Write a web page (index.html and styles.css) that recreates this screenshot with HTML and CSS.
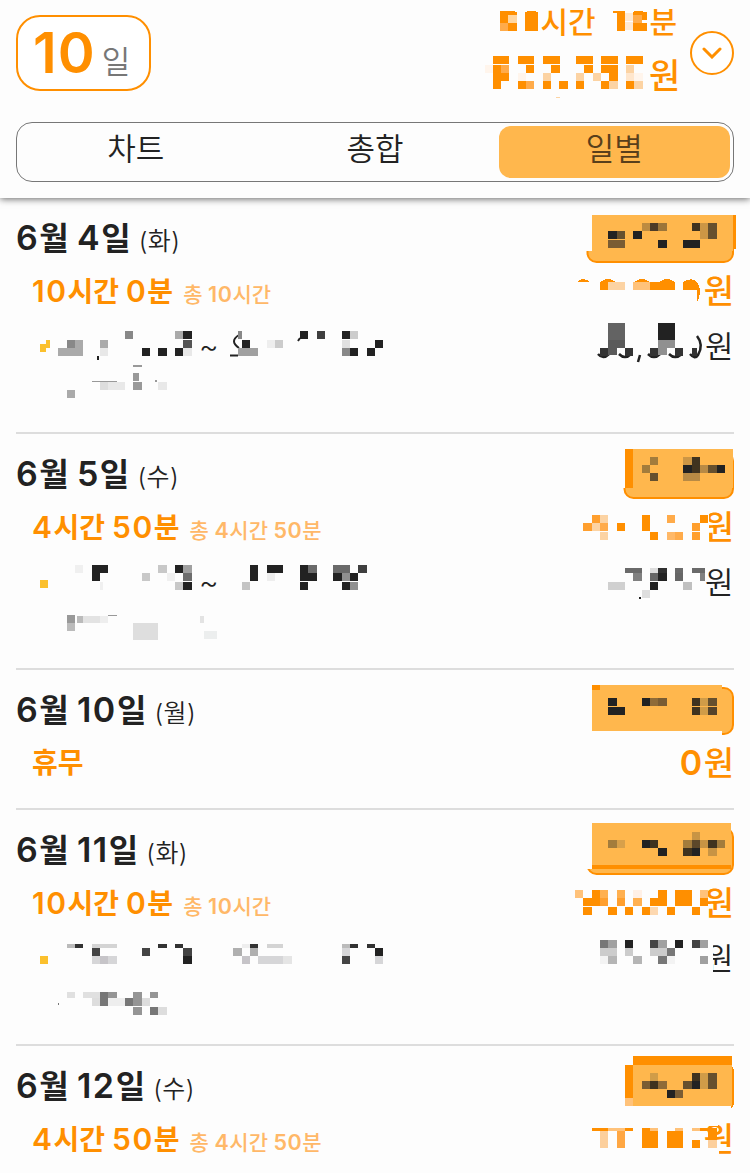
FILE: index.html
```html
<!DOCTYPE html>
<html lang="ko">
<head>
    <meta charset="UTF-8">
    <meta name="viewport" content="width=device-width, initial-scale=1.0">
    <title>일별 근무 기록</title>
    <link rel="stylesheet" href="styles.css">
</head>
<body>
    <header class="header">
        <div class="summary">
            <div class="day-count"><b>10</b><span>일</span></div>
            <div class="totals">
                <div class="total-time">
                    <svg class="mosaic" width="49" height="44" viewBox="492 0 49 44">
                        <path stroke="#ff8f00" stroke-width="1" d="M500 11.500h15M527 11.500h9"/>
                        <path stroke="#ff8f00" stroke-width="19" d="M500 21.5h17M525 21.5h13"/>
                        <path stroke="#ffd6a0" d="M508 19h9"/>
                        <path stroke="#ffab4a" d="M500 27h8"/>
                    </svg>
                    <span class="hours">시간</span>
                    <svg class="mosaic" width="50" height="44" viewBox="600 0 50 44">
                        <path stroke="#ff8f00" stroke-width="2" d="M613 12h12M634 12h9"/>
                        <path stroke="#ff8f00" stroke-width="19" d="M617 21.5h8M633 21.5h9"/>
                        <path stroke="#ff8f00" d="M642 16h5M642 27h5"/>
                        <path stroke="#ffe9d2" d="M625 17h8M625 26h8"/>
                        <path stroke="#ffab4a" d="M633 19h9"/>
                    </svg>
                    <span>분</span>
                </div>
                <div class="total-pay">
                    <svg class="mosaic" width="164" height="54" viewBox="484 46 164 54">
                        <path stroke="#ff8f00" d="M492 60h16M517 60h16M542 60h17M575 60h17M600 60h17M625 60h17M492 69h8M525 69h8M550 69h9M583 69h9M600 69h17M492 77h16M608 77h9M492 85h8M517 85h8M542 85h8M558 85h9M575 85h8M600 85h8M625 85h8"/>
                        <path stroke="#ffab4a" d="M500 69h8M525 85h8"/>
                        <path stroke="#fcd3a3" d="M542 77h8M575 77h8M592 77h8M608 85h9M625 69h8M633 85h9"/>
                        <path stroke="#ffe6cc" d="M625 77h8"/>
                        <path stroke="#fff5ec" d="M484 69h8M517 77h8M633 77h9"/>
                        <path stroke="#fcd3a3" stroke-width="1" d="M555 97.500h4"/>
                    </svg>
                    <span>원</span>
                </div>
            </div>
            <button class="toggle" aria-label="펼치기">
                <svg width="20" height="12" viewBox="0 0 20 12"><path d="M2 2l8 8 8-8"/></svg>
            </button>
        </div>
        <nav class="tabs">
            <a href="#chart">차트</a>
            <a href="#total">총합</a>
            <a href="#daily" class="active">일별</a>
        </nav>
    </header>

    <main>
        <section class="day">
            <div class="day-head">
                <h2><b>6</b>월 <b>4</b>일 <small>(화)</small></h2>
                <svg class="mosaic" width="158" height="48" viewBox="576 215 158 48">
                    <rect class="badge" x="587.500" y="225" width="145.500" height="37" rx="9"/>
                    <path fill="#fdfdfd" stroke="none" d="M585 215h8v36h-8z"/>
                    <path fill="#ffb74d" stroke="none" d="M592 215h141v36h-141z"/>
                    <path fill="#ff8f00" stroke="none" d="M733 215h3v34h-3z"/>
                    <path stroke="#bd8b40" d="M642 227h8"/>
                    <path stroke="#4d3b27" d="M650 227h8"/>
                    <path stroke="#9c7539" d="M658 227h9"/>
                    <path stroke="#40331f" d="M692 227h8"/>
                    <path stroke="#cc9645" d="M700 227h8M700 235h8"/>
                    <path stroke="#66502e" d="M708 227h9M708 235h9M617 235h8"/>
                    <path stroke="#222" d="M608 235h9M633 235h9M658 244h9M683 244h17"/>
                    <path stroke="#7a5c33" d="M608 244h17"/>
                </svg>
            </div>
            <div class="day-time">
                <p><b>10</b>시간 <b>0</b>분 <small>총 <b>10</b>시간</small></p>
                <svg class="mosaic" width="128" height="56" viewBox="576 263 128 56">
                    <path fill="#ff8f00" stroke="none" d="M577 282q6-6 13 0zM600 282q8-6 16 0zM634 282q8-6 16 0zM659 282q8-6 16 0zM683 282q14-8 17 8q0 8-3 12v-18z"/>
                    <path stroke="#ff8f00" d="M600 286h8M650 286h25M683 286h14"/>
                    <path stroke="#fcd3a3" d="M608 286h17"/>
                    <path stroke="#ffc27a" d="M633 286h17"/>
                </svg>
                <span class="pay">원</span>
            </div>
            <div class="shift">
                <svg class="mosaic" width="184" height="54" viewBox="16 319 184 54">
                    <path stroke="#fbc02d" d="M40 348h6M46 344h4"/>
                    <path stroke="#888" d="M67 344h8M125 335h8"/>
                    <path stroke="#aaa" d="M75 344h8M58 352h25M100 344h8M175 335h8"/>
                    <path stroke="#e8e8e8" d="M100 352h8M183 352h9"/>
                    <path stroke="#222" d="M183 335h9M142 352h8M158 352h9M175 352h8"/>
                    <path stroke="#555" d="M183 344h9"/>
                    <path stroke="#222" stroke-width="4" d="M97 358h2"/>
                </svg>
                <span class="tilde">~</span>
                <svg class="mosaic" width="182" height="54" viewBox="218 319 182 54">
                    <path fill="none" stroke="#222" stroke-width="2" shape-rendering="auto" d="M239 335q-10 6 0 13M230 355.500h8M300 338l-2 3"/>
                    <path stroke="#888" d="M238 335h4M342 352h8"/>
                    <path stroke="#a0a0a0" d="M238 352h20"/>
                    <path stroke="#222" d="M242 344h8M300 335h8M342 335h8M350 352h8M375 344h8M367 352h8"/>
                    <path stroke="#3f3f3f" d="M317 335h8"/>
                    <path stroke="#eee" d="M267 344h8"/>
                    <path stroke="#ccc" d="M275 344h8M350 335h8"/>
                    <path stroke="#e0e0e0" d="M342 344h8"/>
                </svg>
                <svg class="mosaic amount" width="130" height="54" viewBox="575 319 130 54">
                    <path fill="none" stroke="#222" stroke-width="2.500" shape-rendering="auto" d="M598 354q5 6 11 0M619 354q6 6 12 0M648 354q6 6 12 0M669 354q6 6 13 0M690 354q5 6 8 1q6-10-1-19M640 355l-2 7"/>
                    <path stroke="#636363" stroke-width="17" d="M608 331.500h17"/>
                    <path stroke="#5a5a5a" stroke-width="15" d="M608 347.500h9"/>
                    <path stroke="#5a5a5a" d="M617 344h8"/>
                    <path stroke="#222" stroke-width="17" d="M658 331.500h17"/>
                    <path stroke="#909090" d="M658 344h17M658 351h9"/>
                    <path stroke="#333" d="M600 352h8M625 352h8M650 352h8M675 352h8M692 352h5"/>
                </svg>
                <span class="won">원</span>
            </div>
            <svg class="mosaic" width="718" height="59" viewBox="16 373 718 59">
                <path stroke="#999" stroke-width="2" d="M133 366h9M155 381h2"/>
                <path stroke="#999" stroke-width="1" d="M92 381.500h25"/>
                <path stroke="#999" d="M133 377h6M133 386h9"/>
                <path stroke="#ddd" d="M100 386h8"/>
                <path stroke="#e8e8e8" d="M108 386h17M158 386h9"/>
                <path stroke="#aaa" d="M67 394h8"/>
            </svg>
        </section>

        <section class="day">
            <div class="day-head">
                <h2><b>6</b>월 <b>5</b>일 <small>(수)</small></h2>
                <svg class="mosaic" width="158" height="48" viewBox="576 451 158 48">
                    <rect class="badge" x="624.500" y="452" width="108.500" height="46" rx="9"/>
                    <path fill="#fdfdfd" stroke="none" d="M622 450h4v38h-4z"/>
                    <path fill="#ffb74d" stroke="none" d="M625 449h108v39h-108z"/>
                    <path fill="#ff8f00" stroke="none" d="M625 449h8v39h-8z"/>
                    <path stroke="#a37c3c" d="M650 461h8M642 469h8"/>
                    <path stroke="#cc9645" d="M683 461h9"/>
                    <path stroke="#40331f" d="M692 461h8M692 469h8"/>
                    <path stroke="#222" d="M683 469h9M717 469h8"/>
                    <path stroke="#b88a45" d="M700 469h8M683 477h17"/>
                    <path stroke="#66502e" d="M708 469h9M650 477h8"/>
                </svg>
            </div>
            <div class="day-time">
                <p><b>4</b>시간 <b>50</b>분 <small>총 <b>4</b>시간 <b>50</b>분</small></p>
                <svg class="mosaic" width="128" height="56" viewBox="576 499 128 56">
                    <path fill="#fdfdfd" stroke="none" d="M700 512h9v30h-9z"/>
                    <path stroke="#ff8f00" d="M642 519h8M700 519h8M617 527h8M642 527h8M650 536h8"/>
                    <path stroke="#ff9f2e" d="M592 519h8M583 527h9M692 527h8M692 536h8"/>
                    <path stroke="#ffab4a" d="M667 519h8M600 527h8M675 536h8"/>
                    <path stroke="#fcd3a3" d="M600 519h8M592 527h8M600 536h8"/>
                    <path stroke="#ffb867" d="M667 536h8"/>
                </svg>
                <span class="pay">원</span>
            </div>
            <div class="shift">
                <svg class="mosaic" width="184" height="54" viewBox="16 555 184 54">
                    <path stroke="#fbc02d" d="M40 584h8"/>
                    <path stroke="#222" d="M92 569h16M175 569h8M92 577h8M183 586h9"/>
                    <path stroke="#c8c8c8" d="M158 569h9M142 577h8M175 586h8"/>
                    <path stroke="#a0a0a0" d="M183 569h9"/>
                    <path stroke="#6d6d6d" d="M183 577h9"/>
                    <path stroke="#f0f0f0" d="M75 569h8M167 577h8M100 586h3"/>
                </svg>
                <span class="tilde">~</span>
                <svg class="mosaic" width="182" height="54" viewBox="218 555 182 54">
                    <path stroke="#222" d="M250 569h8M267 569h16M300 569h8M250 577h8M300 577h17M333 577h9M350 577h8M300 586h8M342 586h8"/>
                    <path stroke="#6a6a6a" d="M308 569h9M333 569h17"/>
                    <path stroke="#3f3f3f" d="M358 569h9"/>
                    <path stroke="#eee" d="M267 577h8"/>
                    <path stroke="#909090" d="M342 577h8M350 586h8"/>
                    <path stroke="#c4c4c4" d="M242 586h8"/>
                </svg>
                <svg class="mosaic amount" width="130" height="54" viewBox="575 555 130 54">
                    <path stroke="#6a6a6a" stroke-width="5" d="M625 570.500h17M675 570.500h8M692 570.500h13"/>
                    <path stroke="#ddd" stroke-width="5" d="M650 570.500h8"/>
                    <path stroke="#303030" stroke-width="5" d="M658 570.500h9"/>
                    <path stroke="#808080" d="M633 577h9M700 577h5"/>
                    <path stroke="#666" d="M650 577h8M675 577h8"/>
                    <path stroke="#222" d="M658 577h9M650 586h8"/>
                    <path stroke="#d0d0d0" d="M608 586h17"/>
                    <path stroke="#c0c0c0" d="M683 586h9"/>
                    <path stroke="#dedede" d="M642 594h8"/>
                    <path stroke="#222" stroke-width="2" d="M639 598h2"/>
                </svg>
                <span class="won">원</span>
            </div>
            <svg class="mosaic" width="718" height="59" viewBox="16 609 718 59">
                <path stroke="#999" d="M67 619h8"/>
                <path stroke="#999" stroke-width="1" d="M108 615.500h9"/>
                <path stroke="#bbb" d="M67 627h8"/>
                <path stroke="#bbb" stroke-width="7" d="M77 619.500h6"/>
                <path stroke="#e3e3e3" stroke-width="7" d="M83 619.500h17M200 619.500h4"/>
                <path stroke="#eee" stroke-width="7" d="M100 619.500h8"/>
                <path stroke="#dedede" stroke-width="17" d="M133 631.500h25"/>
                <path stroke="#eceeee" d="M204 635h13"/>
            </svg>
        </section>

        <section class="day">
            <div class="day-head">
                <h2><b>6</b>월 <b>10</b>일 <small>(월)</small></h2>
                <svg class="mosaic" width="158" height="48" viewBox="576 687 158 48">
                    <rect class="badge" x="690" y="688" width="43" height="46" rx="9"/>
                    <path fill="#fdfdfd" stroke="none" d="M686 730h36v6h-36z"/>
                    <path fill="#ffb74d" stroke="none" d="M592 685h130v46h-130z"/>
                    <path fill="#ff8f00" stroke="none" d="M592 685h8v5h-8z"/>
                    <path stroke="#222" d="M608 702h9M642 702h8M608 711h17"/>
                    <path stroke="#8f6b38" d="M650 702h8"/>
                    <path stroke="#7a5c33" d="M658 702h9"/>
                    <path stroke="#40331f" d="M692 702h8M692 711h8"/>
                    <path stroke="#d09c48" d="M700 702h8M700 711h8"/>
                    <path stroke="#66502e" d="M708 702h9"/>
                    <path stroke="#55432a" d="M708 711h9"/>
                </svg>
            </div>
            <div class="day-time">
                <p>휴무</p>
                <span class="pay"><b>0</b>원</span>
            </div>
        </section>

        <section class="day">
            <div class="day-head">
                <h2><b>6</b>월 <b>11</b>일 <small>(화)</small></h2>
                <svg class="mosaic" width="158" height="48" viewBox="576 827 158 48">
                    <rect class="badge" x="587.500" y="828" width="145.500" height="46" rx="9"/>
                    <path fill="#fdfdfd" stroke="none" d="M585 825h8v44h-8z"/>
                    <path fill="#ffb74d" stroke="none" d="M592 823h139v42h-139z"/>
                    <path fill="#ff8f00" stroke="none" d="M592 865h139v4h-139z"/>
                    <path stroke="#c89444" d="M692 836h8M700 844h8M708 852h9"/>
                    <path stroke="#a37c3c" d="M608 844h9M683 844h9M717 844h8"/>
                    <path stroke="#d8a04a" d="M617 844h8"/>
                    <path stroke="#222" d="M642 844h8M658 852h9M692 852h8"/>
                    <path stroke="#40331f" d="M650 844h8M708 844h9M683 852h9"/>
                    <path stroke="#5c472a" d="M692 844h8"/>
                </svg>
            </div>
            <div class="day-time">
                <p><b>10</b>시간 <b>0</b>분 <small>총 <b>10</b>시간</small></p>
                <svg class="mosaic" width="128" height="56" viewBox="576 875 128 56">
                    <path fill="#fdfdfd" stroke="none" d="M700 888h8v30h-8z"/>
                    <path stroke="#ff8f00" d="M592 894h8M658 894h9M675 894h17M583 902h17M650 902h17M675 902h17M700 902h8M583 911h9M608 911h9M625 911h8M642 911h8M667 911h8M692 911h8"/>
                    <path stroke="#ff9f2e" d="M600 902h8M617 902h8"/>
                    <path stroke="#ffb050" d="M600 894h8M617 894h8M633 902h9"/>
                    <path stroke="#ffc27a" d="M575 894h8M700 894h8"/>
                    <path stroke="#fdd8b0" d="M650 911h8"/>
                    <path stroke="#fff0e6" d="M633 894h9"/>
                </svg>
                <span class="pay">원</span>
            </div>
            <div class="shift">
                <svg class="mosaic" width="384" height="54" viewBox="16 931 384 54">
                    <path stroke="#fbc02d" d="M40 960h8"/>
                    <path stroke="#bbb" stroke-width="4" d="M67 946h8M342 946h8"/>
                    <path stroke="#333" stroke-width="4" d="M75 946h8M158 946h9M175 946h8M250 946h8M350 946h8M367 946h8"/>
                    <path stroke="#d4d4d4" stroke-width="4" d="M92 946h25M267 946h16"/>
                    <path stroke="#eee" stroke-width="4" d="M242 946h8"/>
                    <path stroke="#444" d="M92 952h8M142 952h8M183 952h9M342 960h8"/>
                    <path stroke="#b0b0b0" d="M233 952h9M250 952h8"/>
                    <path stroke="#222" d="M375 952h8M183 960h9"/>
                    <path stroke="#d6d6d8" d="M92 960h8M108 960h9M342 952h8M258 960h25M375 960h8"/>
                    <path stroke="#c6c4c8" d="M100 960h8M242 960h8"/>
                    <path stroke="#e5e5e5" d="M283 960h9"/>
                </svg>
                <svg class="mosaic amount" width="130" height="54" viewBox="575 931 130 54">
                    <path fill="#fdfdfd" stroke="none" d="M700 940h13v34h-13z"/>
                    <path stroke="#777" d="M600 944h8M667 952h8M658 960h9"/>
                    <path stroke="#a0a0a0" d="M608 944h9M658 944h9M700 944h8M700 960h8"/>
                    <path stroke="#222" d="M625 944h8M675 944h8"/>
                    <path stroke="#444" d="M650 944h8M692 944h8"/>
                    <path stroke="#ccc" d="M600 952h17M625 952h8M650 952h17"/>
                    <path stroke="#f3f3f3" d="M600 960h8M667 960h8"/>
                    <path stroke="#b5b5b5" d="M608 960h9M633 960h9"/>
                </svg>
                <span class="won">원</span>
            </div>
            <svg class="mosaic" width="718" height="59" viewBox="16 985 718 59">
                <path stroke="#e0e0e0" stroke-width="6" d="M67 995h8M83 995h17"/>
                <path stroke="#777" stroke-width="6" d="M100 995h8"/>
                <path stroke="#959595" stroke-width="6" d="M108 995h9M133 995h9M150 995h8"/>
                <path stroke="#ddd" d="M92 1002h8M142 1002h8M158 1011h9"/>
                <path stroke="#777" d="M100 1002h8M125 1002h8M150 1011h8"/>
                <path stroke="#eee" d="M108 1002h17"/>
                <path stroke="#959595" d="M133 1002h9M133 1011h9"/>
                <path stroke="#777" stroke-width="2" d="M58 1004h1"/>
            </svg>
        </section>

        <section class="day">
            <div class="day-head">
                <h2><b>6</b>월 <b>12</b>일 <small>(수)</small></h2>
                <svg class="mosaic" width="158" height="48" viewBox="576 1063 158 48">
                    <path fill="#ff8f00" stroke="none" d="M633 1056h99v9h-99zM625 1065h8v33h-8zM731 1066q3 2 3 6v30q0 4-3 6z"/>
                    <path fill="#ffc27a" stroke="none" d="M625 1098h8v8h-8z"/>
                    <path fill="#ffb74d" stroke="none" d="M633 1065h99v41h-99z"/>
                    <path stroke="#d09c48" d="M650 1077h8M700 1077h8M700 1085h8"/>
                    <path stroke="#40331f" d="M692 1077h8M650 1085h8"/>
                    <path stroke="#66502e" d="M708 1077h9M683 1085h9M708 1085h9"/>
                    <path stroke="#7a5c33" d="M642 1085h8M675 1094h8"/>
                    <path stroke="#8f6b38" d="M658 1085h9"/>
                    <path stroke="#222" d="M692 1085h8M667 1094h8"/>
                </svg>
            </div>
            <div class="day-time">
                <p><b>4</b>시간 <b>50</b>분 <small>총 <b>4</b>시간 <b>50</b>분</small></p>
                <svg class="mosaic" width="128" height="56" viewBox="576 1111 128 56">
                    <path fill="#fdfdfd" stroke="none" d="M700 1140h19v16h-19zM700 1120h18v6h-18z"/>
                    <path stroke="#ff8f00" stroke-width="3" d="M592 1129.500h16M625 1129.500h8M642 1129.500h8M700 1129.500h8"/>
                    <path stroke="#ffc27a" stroke-width="3" d="M608 1129.500h17M650 1129.500h8M675 1129.500h8M692 1129.500h8"/>
                    <path stroke="#fccf9c" stroke-width="17" d="M600 1139.500h8"/>
                    <path stroke="#ffa743" stroke-width="17" d="M617 1139.500h8"/>
                    <path stroke="#ff8f00" stroke-width="17" d="M642 1139.500h16M667 1139.500h16"/>
                    <path stroke="#ff8f00" d="M692 1144h8"/>
                    <path stroke="#ff8f00" stroke-width="12" d="M708 1134h9"/>
                    <path stroke="#fccf9c" d="M708 1144h9"/>
                </svg>
                <span class="pay">원</span>
            </div>
        </section>
    </main>
</body>
</html>
```

FILE: styles.css
```css
* {
    box-sizing: border-box;
}

body {
    margin: 0;
    height: 1173px;
    overflow: hidden;
    font-family: Inter, 'Noto Sans CJK KR', sans-serif;
    background: #fdfdfd;
    color: #222;
}

h2, p {
    margin: 0;
}

/* default cell height, some paths set their own */
.mosaic {
    display: block;
    flex: none;
    position: relative;
    overflow: visible;
    shape-rendering: crispEdges;
    stroke-width: 8.4px;
}

.badge {
    fill: #ffb74d;
    stroke: #ff8f00;
    stroke-width: 2px;
    shape-rendering: auto;
}

.header {
    position: relative;
    height: 198px;
    padding: 0 16px;
    box-shadow: 0 1px 7px rgba(0, 0, 0, 0.6);
    background: #fdfdfd;
}

.summary {
    display: flex;
    height: 122px;
}

.day-count {
    display: flex;
    align-items: baseline;
    width: 135px;
    height: 76px;
    margin-top: 15px;
    padding-left: 15px;
    border: 2px solid #ff8f00;
    border-radius: 24px;
    background: #fff;
    line-height: 72px;
}

.day-count b {
    font-size: 56px;
    font-weight: 600;
    letter-spacing: 1px;
    color: #ff8f00;
}

.day-count span {
    margin-left: 6px;
    font-size: 31px;
    font-weight: 350;
    color: #777;
}

.totals {
    margin-left: auto;
    color: #ff8f00;
    font-weight: 500;
}

.total-time, .total-pay {
    display: flex;
    justify-content: flex-end;
}

.total-time {
    height: 46px;
    font-size: 30px;
    line-height: 44px;
}

.total-time .hours {
    width: 59px;
    margin-left: -1px;
    margin-right: 1px;
}

.total-time span:last-child {
    margin-right: 1px;
    margin-left: -1px;
}

.total-pay {
    height: 54px;
    font-size: 34px;
    line-height: 59px;
}

.total-pay span {
    width: 29px;
}

.toggle {
    display: flex;
    align-items: center;
    justify-content: center;
    width: 44px;
    height: 44px;
    margin: 31px 0 0 12px;
    padding: 0;
    border: 2px solid #ff8f00;
    border-radius: 50%;
    background: #fff;
}

.toggle path {
    fill: none;
    stroke: #ff8f00;
    stroke-width: 3;
    stroke-linecap: round;
}

.tabs {
    display: grid;
    grid-template-columns: repeat(3, 1fr);
    height: 60px;
    padding: 3px;
    border: 1px solid #777;
    border-radius: 16px;
}

.tabs a {
    border-radius: 12px;
    font-size: 31px;
    font-weight: 350;
    line-height: 46px;
    text-align: center;
    text-decoration: none;
    color: #222;
}

.tabs a:first-child {
    padding-right: 5px;
}

.tabs .active {
    margin-left: 6px;
    padding-right: 1px;
    background: #ffb74d;
    color: #593f1b;
}

.day {
    height: 236px;
    margin: 0 16px;
    padding-top: 17px;
    border-bottom: 2px solid #ddd;
}

.day:nth-child(3) {
    height: 140px;
}

.day:last-child {
    height: 127px;
    border: none;
}

.day-head {
    display: flex;
    justify-content: space-between;
    height: 48px;
}

.day-head h2 {
    font-size: 32px;
    font-weight: 600;
    line-height: 46px;
    white-space: nowrap;
}

.day-head b {
    font-size: 34px;
    font-weight: 600;
    letter-spacing: 1.6px;
}

.day-head small {
    font-size: 25px;
    font-weight: 350;
    letter-spacing: 0.4px;
}

.day-time {
    display: flex;
    height: 56px;
    padding-left: 16px;
    color: #ff8f00;
    line-height: 56px;
}

.day-time p {
    margin-right: auto;
    font-size: 28px;
    font-weight: 600;
    white-space: nowrap;
}

.day-time b {
    font-size: 30px;
    font-weight: 600;
    letter-spacing: 1.5px;
}

.day-time small {
    margin-left: 3px;
    font-size: 21px;
    font-weight: 500;
    color: #ffb868;
}

.day-time small b {
    font-size: 21.5px;
    font-weight: 600;
    letter-spacing: 0.5px;
}

.day-time .pay {
    font-size: 33px;
    font-weight: 500;
}

.day-time .pay b {
    font-size: 34px;
}

.shift {
    display: flex;
    height: 54px;
    line-height: 55px;
}

.tilde {
    width: 18px;
    font-size: 30px;
    font-weight: 300;
    text-indent: -1px;
}

.amount {
    margin-left: auto;
}

.won {
    width: 29px;
    font-size: 31px;
    font-weight: 350;
}
```
